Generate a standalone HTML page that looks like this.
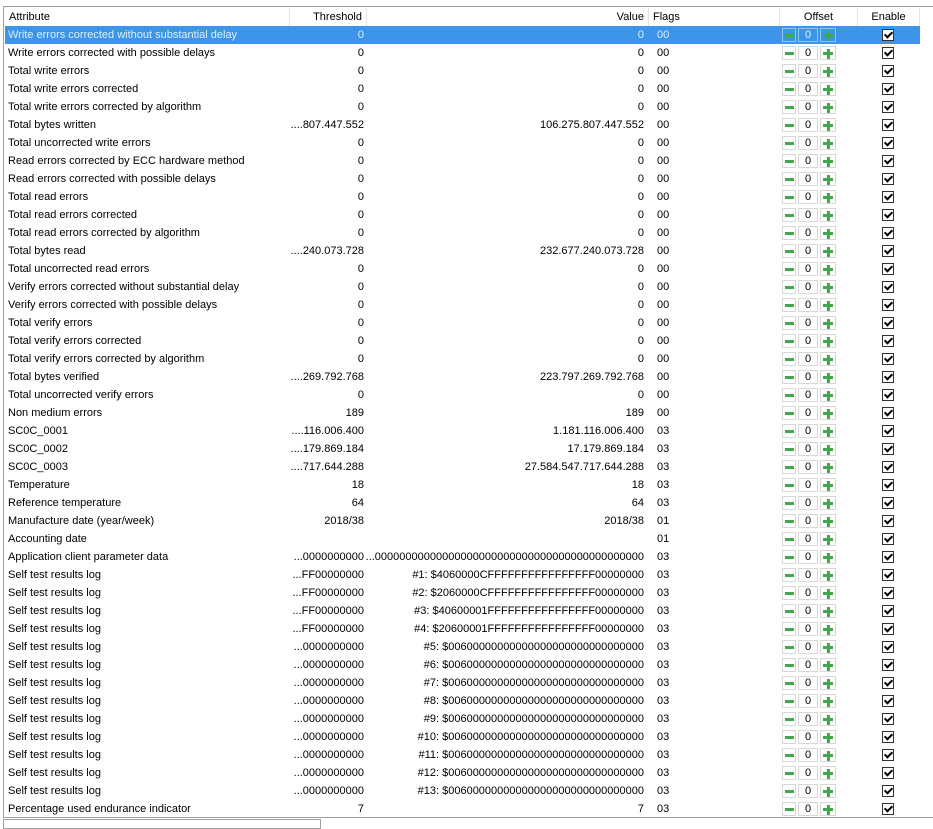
<!DOCTYPE html>
<html><head><meta charset="utf-8"><style>
body{margin:0;width:933px;height:824px;background:#fff;position:relative;overflow:hidden;font-family:"Liberation Sans",sans-serif;font-size:11px;color:#000}
i{font-style:normal}
.frame{position:absolute;left:3px;top:6px;width:940px;height:810px;border-top:1px solid #a0a0a0;border-left:1px solid #a0a0a0;border-bottom:1px solid #a0a0a0}
.hdr{position:absolute;top:8px;left:5px;height:18px;width:915px;background:#fff}
.hdr div{position:absolute;top:0;height:18px;line-height:19px;border-right:1px solid #e3e3e3;box-sizing:border-box;padding:0 4px}
.rows{position:absolute;top:26px;left:5px;width:915px}
.r{position:relative;height:18px;line-height:18px}
.r.sel{background:#3c95e8;color:#d9f0ff}
.r span{position:absolute;top:0;white-space:nowrap}
.a{left:3px}.t{right:556px}.v{right:276px}.f{left:652px}
.m{position:absolute;left:777px;top:2px;width:14px;height:14px;border:1px solid #d8d8d8;box-sizing:border-box}
.m:after{content:"";position:absolute;left:2px;top:5px;width:9px;height:3px;background:#3fa84a}
.n{position:absolute;left:793px;top:2px;width:20px;height:14px;border:1px solid #d8d8d8;box-sizing:border-box;text-align:center;line-height:12px}
.p{position:absolute;left:815px;top:2px;width:16px;height:14px;border:1px solid #d8d8d8;box-sizing:border-box}
.p:before{content:"";position:absolute;left:2px;top:5px;width:10px;height:3px;background:#3fa84a}
.p:after{content:"";position:absolute;left:5.5px;top:1.5px;width:3px;height:10px;background:#3fa84a}
.c{position:absolute;left:877px;top:3px;width:12px;height:12px;border:1px solid #333;box-sizing:border-box;background:#fff}
.c:after{content:"";position:absolute;left:3px;top:0px;width:3px;height:6px;border:solid #000;border-width:0 2px 2px 0;transform:rotate(45deg)}
.sel .m,.sel .n,.sel .p{border-color:#8cc4f0}
.bot{position:absolute;left:3px;top:819px;width:316px;height:8px;border:1px solid #a0a0a0}
</style></head><body>
<div class="frame"></div>
<div class="hdr">
<div style="left:0;width:285px">Attribute</div>
<div style="left:285px;width:77px;text-align:right">Threshold</div>
<div style="left:362px;width:282px;text-align:right">Value</div>
<div style="left:644px;width:131px">Flags</div>
<div style="left:775px;width:78px;text-align:center">Offset</div>
<div style="left:853px;width:62px;text-align:center">Enable</div>
</div>
<div class="rows">
<div class="r sel"><span class="a">Write errors corrected without substantial delay</span><span class="t">0</span><span class="v">0</span><span class="f">00</span><i class="m"></i><i class="n">0</i><i class="p"></i><i class="c"></i></div>
<div class="r"><span class="a">Write errors corrected with possible delays</span><span class="t">0</span><span class="v">0</span><span class="f">00</span><i class="m"></i><i class="n">0</i><i class="p"></i><i class="c"></i></div>
<div class="r"><span class="a">Total write errors</span><span class="t">0</span><span class="v">0</span><span class="f">00</span><i class="m"></i><i class="n">0</i><i class="p"></i><i class="c"></i></div>
<div class="r"><span class="a">Total write errors corrected</span><span class="t">0</span><span class="v">0</span><span class="f">00</span><i class="m"></i><i class="n">0</i><i class="p"></i><i class="c"></i></div>
<div class="r"><span class="a">Total write errors corrected by algorithm</span><span class="t">0</span><span class="v">0</span><span class="f">00</span><i class="m"></i><i class="n">0</i><i class="p"></i><i class="c"></i></div>
<div class="r"><span class="a">Total bytes written</span><span class="t">....807.447.552</span><span class="v">106.275.807.447.552</span><span class="f">00</span><i class="m"></i><i class="n">0</i><i class="p"></i><i class="c"></i></div>
<div class="r"><span class="a">Total uncorrected write errors</span><span class="t">0</span><span class="v">0</span><span class="f">00</span><i class="m"></i><i class="n">0</i><i class="p"></i><i class="c"></i></div>
<div class="r"><span class="a">Read errors corrected by ECC hardware method</span><span class="t">0</span><span class="v">0</span><span class="f">00</span><i class="m"></i><i class="n">0</i><i class="p"></i><i class="c"></i></div>
<div class="r"><span class="a">Read errors corrected with possible delays</span><span class="t">0</span><span class="v">0</span><span class="f">00</span><i class="m"></i><i class="n">0</i><i class="p"></i><i class="c"></i></div>
<div class="r"><span class="a">Total read errors</span><span class="t">0</span><span class="v">0</span><span class="f">00</span><i class="m"></i><i class="n">0</i><i class="p"></i><i class="c"></i></div>
<div class="r"><span class="a">Total read errors corrected</span><span class="t">0</span><span class="v">0</span><span class="f">00</span><i class="m"></i><i class="n">0</i><i class="p"></i><i class="c"></i></div>
<div class="r"><span class="a">Total read errors corrected by algorithm</span><span class="t">0</span><span class="v">0</span><span class="f">00</span><i class="m"></i><i class="n">0</i><i class="p"></i><i class="c"></i></div>
<div class="r"><span class="a">Total bytes read</span><span class="t">....240.073.728</span><span class="v">232.677.240.073.728</span><span class="f">00</span><i class="m"></i><i class="n">0</i><i class="p"></i><i class="c"></i></div>
<div class="r"><span class="a">Total uncorrected read errors</span><span class="t">0</span><span class="v">0</span><span class="f">00</span><i class="m"></i><i class="n">0</i><i class="p"></i><i class="c"></i></div>
<div class="r"><span class="a">Verify errors corrected without substantial delay</span><span class="t">0</span><span class="v">0</span><span class="f">00</span><i class="m"></i><i class="n">0</i><i class="p"></i><i class="c"></i></div>
<div class="r"><span class="a">Verify errors corrected with possible delays</span><span class="t">0</span><span class="v">0</span><span class="f">00</span><i class="m"></i><i class="n">0</i><i class="p"></i><i class="c"></i></div>
<div class="r"><span class="a">Total verify errors</span><span class="t">0</span><span class="v">0</span><span class="f">00</span><i class="m"></i><i class="n">0</i><i class="p"></i><i class="c"></i></div>
<div class="r"><span class="a">Total verify errors corrected</span><span class="t">0</span><span class="v">0</span><span class="f">00</span><i class="m"></i><i class="n">0</i><i class="p"></i><i class="c"></i></div>
<div class="r"><span class="a">Total verify errors corrected by algorithm</span><span class="t">0</span><span class="v">0</span><span class="f">00</span><i class="m"></i><i class="n">0</i><i class="p"></i><i class="c"></i></div>
<div class="r"><span class="a">Total bytes verified</span><span class="t">....269.792.768</span><span class="v">223.797.269.792.768</span><span class="f">00</span><i class="m"></i><i class="n">0</i><i class="p"></i><i class="c"></i></div>
<div class="r"><span class="a">Total uncorrected verify errors</span><span class="t">0</span><span class="v">0</span><span class="f">00</span><i class="m"></i><i class="n">0</i><i class="p"></i><i class="c"></i></div>
<div class="r"><span class="a">Non medium errors</span><span class="t">189</span><span class="v">189</span><span class="f">00</span><i class="m"></i><i class="n">0</i><i class="p"></i><i class="c"></i></div>
<div class="r"><span class="a">SC0C_0001</span><span class="t">....116.006.400</span><span class="v">1.181.116.006.400</span><span class="f">03</span><i class="m"></i><i class="n">0</i><i class="p"></i><i class="c"></i></div>
<div class="r"><span class="a">SC0C_0002</span><span class="t">....179.869.184</span><span class="v">17.179.869.184</span><span class="f">03</span><i class="m"></i><i class="n">0</i><i class="p"></i><i class="c"></i></div>
<div class="r"><span class="a">SC0C_0003</span><span class="t">....717.644.288</span><span class="v">27.584.547.717.644.288</span><span class="f">03</span><i class="m"></i><i class="n">0</i><i class="p"></i><i class="c"></i></div>
<div class="r"><span class="a">Temperature</span><span class="t">18</span><span class="v">18</span><span class="f">03</span><i class="m"></i><i class="n">0</i><i class="p"></i><i class="c"></i></div>
<div class="r"><span class="a">Reference temperature</span><span class="t">64</span><span class="v">64</span><span class="f">03</span><i class="m"></i><i class="n">0</i><i class="p"></i><i class="c"></i></div>
<div class="r"><span class="a">Manufacture date (year/week)</span><span class="t">2018/38</span><span class="v">2018/38</span><span class="f">01</span><i class="m"></i><i class="n">0</i><i class="p"></i><i class="c"></i></div>
<div class="r"><span class="a">Accounting date</span><span class="f">01</span><i class="m"></i><i class="n">0</i><i class="p"></i><i class="c"></i></div>
<div class="r"><span class="a">Application client parameter data</span><span class="t">...0000000000</span><span class="v">...00000000000000000000000000000000000000000000</span><span class="f">03</span><i class="m"></i><i class="n">0</i><i class="p"></i><i class="c"></i></div>
<div class="r"><span class="a">Self test results log</span><span class="t">...FF00000000</span><span class="v">#1: $4060000CFFFFFFFFFFFFFFFF00000000</span><span class="f">03</span><i class="m"></i><i class="n">0</i><i class="p"></i><i class="c"></i></div>
<div class="r"><span class="a">Self test results log</span><span class="t">...FF00000000</span><span class="v">#2: $2060000CFFFFFFFFFFFFFFFF00000000</span><span class="f">03</span><i class="m"></i><i class="n">0</i><i class="p"></i><i class="c"></i></div>
<div class="r"><span class="a">Self test results log</span><span class="t">...FF00000000</span><span class="v">#3: $40600001FFFFFFFFFFFFFFFF00000000</span><span class="f">03</span><i class="m"></i><i class="n">0</i><i class="p"></i><i class="c"></i></div>
<div class="r"><span class="a">Self test results log</span><span class="t">...FF00000000</span><span class="v">#4: $20600001FFFFFFFFFFFFFFFF00000000</span><span class="f">03</span><i class="m"></i><i class="n">0</i><i class="p"></i><i class="c"></i></div>
<div class="r"><span class="a">Self test results log</span><span class="t">...0000000000</span><span class="v">#5: $00600000000000000000000000000000</span><span class="f">03</span><i class="m"></i><i class="n">0</i><i class="p"></i><i class="c"></i></div>
<div class="r"><span class="a">Self test results log</span><span class="t">...0000000000</span><span class="v">#6: $00600000000000000000000000000000</span><span class="f">03</span><i class="m"></i><i class="n">0</i><i class="p"></i><i class="c"></i></div>
<div class="r"><span class="a">Self test results log</span><span class="t">...0000000000</span><span class="v">#7: $00600000000000000000000000000000</span><span class="f">03</span><i class="m"></i><i class="n">0</i><i class="p"></i><i class="c"></i></div>
<div class="r"><span class="a">Self test results log</span><span class="t">...0000000000</span><span class="v">#8: $00600000000000000000000000000000</span><span class="f">03</span><i class="m"></i><i class="n">0</i><i class="p"></i><i class="c"></i></div>
<div class="r"><span class="a">Self test results log</span><span class="t">...0000000000</span><span class="v">#9: $00600000000000000000000000000000</span><span class="f">03</span><i class="m"></i><i class="n">0</i><i class="p"></i><i class="c"></i></div>
<div class="r"><span class="a">Self test results log</span><span class="t">...0000000000</span><span class="v">#10: $00600000000000000000000000000000</span><span class="f">03</span><i class="m"></i><i class="n">0</i><i class="p"></i><i class="c"></i></div>
<div class="r"><span class="a">Self test results log</span><span class="t">...0000000000</span><span class="v">#11: $00600000000000000000000000000000</span><span class="f">03</span><i class="m"></i><i class="n">0</i><i class="p"></i><i class="c"></i></div>
<div class="r"><span class="a">Self test results log</span><span class="t">...0000000000</span><span class="v">#12: $00600000000000000000000000000000</span><span class="f">03</span><i class="m"></i><i class="n">0</i><i class="p"></i><i class="c"></i></div>
<div class="r"><span class="a">Self test results log</span><span class="t">...0000000000</span><span class="v">#13: $00600000000000000000000000000000</span><span class="f">03</span><i class="m"></i><i class="n">0</i><i class="p"></i><i class="c"></i></div>
<div class="r"><span class="a">Percentage used endurance indicator</span><span class="t">7</span><span class="v">7</span><span class="f">03</span><i class="m"></i><i class="n">0</i><i class="p"></i><i class="c"></i></div>
</div>
<div class="bot"></div>
</body></html>
